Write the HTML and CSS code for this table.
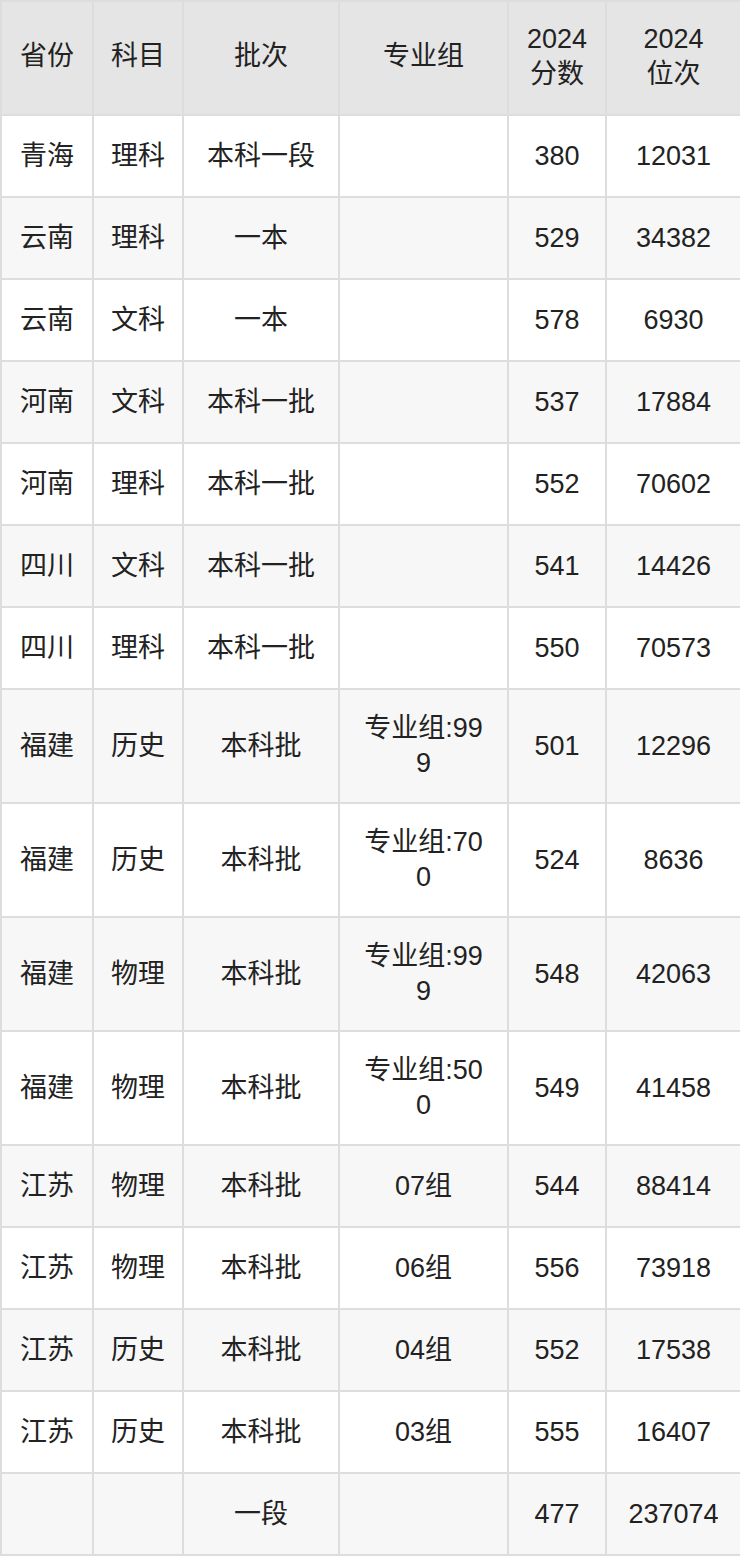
FILE: index.html
```html
<!DOCTYPE html>
<html lang="zh-CN">
<head>
<meta charset="utf-8">
<title>分数线</title>
<link rel="stylesheet" href="styles.css">
</head>
<body>
<table class="score-table">
  <colgroup>
    <col class="c-prov">
    <col class="c-subj">
    <col class="c-batch">
    <col class="c-group">
    <col class="c-score">
    <col class="c-rank">
  </colgroup>
  <thead>
    <tr>
      <th>省份</th>
      <th>科目</th>
      <th>批次</th>
      <th>专业组</th>
      <th>2024<br>分数</th>
      <th>2024<br>位次</th>
    </tr>
  </thead>
  <tbody>
    <tr><td>青海</td><td>理科</td><td>本科一段</td><td></td><td>380</td><td>12031</td></tr>
    <tr><td>云南</td><td>理科</td><td>一本</td><td></td><td>529</td><td>34382</td></tr>
    <tr><td>云南</td><td>文科</td><td>一本</td><td></td><td>578</td><td>6930</td></tr>
    <tr><td>河南</td><td>文科</td><td>本科一批</td><td></td><td>537</td><td>17884</td></tr>
    <tr><td>河南</td><td>理科</td><td>本科一批</td><td></td><td>552</td><td>70602</td></tr>
    <tr><td>四川</td><td>文科</td><td>本科一批</td><td></td><td>541</td><td>14426</td></tr>
    <tr><td>四川</td><td>理科</td><td>本科一批</td><td></td><td>550</td><td>70573</td></tr>
    <tr class="tall"><td>福建</td><td>历史</td><td>本科批</td><td class="wrap">专业组:999</td><td>501</td><td>12296</td></tr>
    <tr class="tall"><td>福建</td><td>历史</td><td>本科批</td><td class="wrap">专业组:700</td><td>524</td><td>8636</td></tr>
    <tr class="tall"><td>福建</td><td>物理</td><td>本科批</td><td class="wrap">专业组:999</td><td>548</td><td>42063</td></tr>
    <tr class="tall"><td>福建</td><td>物理</td><td>本科批</td><td class="wrap">专业组:500</td><td>549</td><td>41458</td></tr>
    <tr><td>江苏</td><td>物理</td><td>本科批</td><td>07组</td><td>544</td><td>88414</td></tr>
    <tr><td>江苏</td><td>物理</td><td>本科批</td><td>06组</td><td>556</td><td>73918</td></tr>
    <tr><td>江苏</td><td>历史</td><td>本科批</td><td>04组</td><td>552</td><td>17538</td></tr>
    <tr><td>江苏</td><td>历史</td><td>本科批</td><td>03组</td><td>555</td><td>16407</td></tr>
    <tr><td></td><td></td><td>一段</td><td></td><td>477</td><td>237074</td></tr>
  </tbody>
</table>
</body>
</html>
```
FILE: styles.css
```css
html, body {
  margin: 0;
  padding: 0;
  background: #ffffff;
}

.score-table {
  width: 740px;
  table-layout: fixed;
  border-collapse: collapse;
  border: 2px solid #dddddd;
  font-family: "Liberation Sans", "Noto Sans CJK SC", sans-serif;
  font-size: 27px;
  line-height: 35px;
  color: #222222;
}

.c-prov { width: 92px; }
.c-subj { width: 90px; }
.c-batch { width: 156px; }
.c-group { width: 169px; }
.c-score { width: 98px; }
.c-rank { width: 135px; }

.score-table th,
.score-table td {
  border: 2px solid #dddddd;
  text-align: center;
  vertical-align: middle;
  font-weight: normal;
  padding: 0 8px;
  height: 80px;
}

.score-table thead th {
  background: #e5e5e5;
  height: 109px;
  padding-bottom: 3px;
}

.score-table tr.tall td {
  height: 112px;
}

.score-table td.wrap {
  padding-left: 20px;
  padding-right: 20px;
  word-break: break-all;
}

.score-table tbody tr:nth-child(even) td {
  background: #f7f7f7;
}
```
